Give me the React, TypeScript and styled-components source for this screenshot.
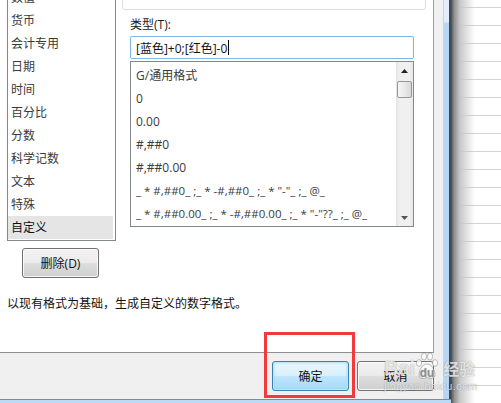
import styled, { createGlobalStyle, css } from 'styled-components';

const GlobalStyle = createGlobalStyle`
  html, body {
    margin: 0;
    padding: 0;
    background: #fff;
  }
  body {
    font-family: 'Open Sans', 'Noto Sans CJK SC', sans-serif;
    font-size: 12px;
    color: #222;
  }
`;

const categories = [
  '数值',
  '货币',
  '会计专用',
  '日期',
  '时间',
  '百分比',
  '分数',
  '科学记数',
  '文本',
  '特殊',
  '自定义',
];

const formats = [
  'G/通用格式',
  '0',
  '0.00',
  '#,##0',
  '#,##0.00',
  '_ * #,##0_ ;_ * -#,##0_ ;_ * "-"_ ;_ @_',
  '_ * #,##0.00_ ;_ * -#,##0.00_ ;_ * "-"??_ ;_ @_',
];

const Screen = styled.div`
  position: relative;
  display: flex;
  width: 501px;
  height: 403px;
  overflow: hidden;
`;

const Window = styled.div`
  display: flex;
  flex-direction: column;
  width: 451px;
  flex-shrink: 0;
`;

const WindowRow = styled.div`
  display: flex;
  height: 399px;
`;

const Client = styled.div`
  display: flex;
  flex-direction: column;
  width: 443px;
  background: #f0f0f0;
`;

const Panel = styled.div`
  box-sizing: border-box;
  width: 434px;
  height: 353px;
  padding-left: 7px;
  background: #fff;
  border-right: 1px solid #a0a0a0;
  border-bottom: 1px solid #8e8f8f;
  overflow: hidden;
`;

const Columns = styled.div`
  display: flex;
  gap: 14px;
  margin-top: -15px;
`;

const LeftCol = styled.div`
  display: flex;
  flex-direction: column;
  width: 109px;
`;

const CategoryList = styled.div`
  box-sizing: border-box;
  height: 256px;
  border: 1px solid #828790;
  padding-right: 2px;
`;

const Category = styled.div<{ $selected?: boolean }>`
  height: 23px;
  line-height: 23px;
  padding-left: 3px;
  color: ${p => (p.$selected ? '#111' : '#3a3a3a')};
  background: ${p => (p.$selected ? '#e5e5e5' : 'transparent')};
  white-space: nowrap;
`;

const buttonFace = css`
  box-sizing: border-box;
  display: flex;
  align-items: center;
  justify-content: center;
  width: 77px;
  height: 30px;
  border: 1px solid #707070;
  border-radius: 3px;
  color: #111;
  font-family: 'Open Sans', 'Noto Sans CJK SC', sans-serif;
  font-size: 12px;
  box-shadow: inset 0 0 0 1px rgba(255, 255, 255, 0.8);
  background: linear-gradient(#f3f3f3 0%, #ebebeb 48%, #dddddd 52%, #cfcfcf 100%);
`;

const PushButton = styled.div`
  ${buttonFace}
  margin: 7px 0 0 15px;
`;

const RightCol = styled.div`
  display: flex;
  flex-direction: column;
  width: 284px;
`;

const SampleGroup = styled.div`
  box-sizing: border-box;
  height: 25px;
  width: 304px;
  margin-left: -8px;
  border: 1px solid #d5dfe5;
  border-radius: 3px;
`;

const FieldLabel = styled.div`
  height: 18px;
  line-height: 18px;
  margin-top: 6px;
  color: #1a1a1a;
`;

const TypeInput = styled.div`
  box-sizing: border-box;
  display: flex;
  align-items: center;
  height: 23px;
  margin-top: 2px;
  padding-left: 5px;
  border: 1px solid #7eb4ea;
  border-radius: 2px;
  color: #111;
  white-space: nowrap;
`;

const Caret = styled.span`
  display: inline-block;
  width: 1px;
  height: 15px;
  margin-left: 1px;
  background: #000;
`;

const FormatList = styled.div`
  box-sizing: border-box;
  display: flex;
  height: 166px;
  margin-top: 2px;
  border: 1px solid #828790;
`;

const FormatItems = styled.div`
  flex: 1;
  padding: 2px 0 0 5px;
  overflow: hidden;
`;

const FormatItem = styled.div<{ $small?: boolean }>`
  height: 23px;
  line-height: 23px;
  color: #3a3a3a;
  white-space: nowrap;
  font-size: ${p => (p.$small ? '11.5px' : '12px')};
`;

const ScrollBar = styled.div`
  display: flex;
  flex-direction: column;
  width: 17px;
  background: linear-gradient(to right, #e3e3e3, #f0f0f0 20%, #f0f0f0 80%, #e6e6e6);
`;

const ArrowButton = styled.div`
  display: flex;
  align-items: center;
  justify-content: center;
  height: 17px;
`;

const Thumb = styled.div`
  box-sizing: border-box;
  height: 17px;
  margin: 2px 1px 0;
  border: 1px solid #979797;
  border-radius: 2px;
  background: linear-gradient(to right, #f6f6f6, #e9e9e9 50%, #d8d8d8);
`;

const Track = styled.div`
  flex: 1;
`;

const Hint = styled.div`
  height: 18px;
  line-height: 18px;
  margin-top: 17px;
  color: #111;
`;

const Footer = styled.div`
  flex: 1;
  display: flex;
  justify-content: flex-end;
  gap: 8px;
  padding: 8px 9px 0 0;
`;

const DialogButton = styled.div<{ $default?: boolean }>`
  ${buttonFace}
  ${p =>
    p.$default &&
    css`
      border-color: #3c7fb1;
      box-shadow: inset 0 0 0 1px #c4e5f6, inset 0 0 2px 1px #8ed0f4;
      background: linear-gradient(#eaf6fd 0%, #d9f0fc 48%, #bee6fd 52%, #a7d9f5 100%);
    `}
`;

const SideFrame = styled.div`
  width: 8px;
  box-sizing: border-box;
  border-left: 1px solid #c9d6e2;
  border-right: 2px solid #3f4a55;
  background: linear-gradient(#e4eefa 0, #e4eefa 22px, #b7d6f6 23px, #b7d6f6 100%);
`;

const BottomFrame = styled.div`
  height: 4px;
  box-sizing: border-box;
  border-top: 1px solid #8a8a8a;
  background: #bcd9f5;
`;

const Sheet = styled.div`
  flex: 1;
  background:
    linear-gradient(to right, #4b4b4b 0, #8d8d8d 3px, #c9c9c9 9px, rgba(255, 255, 255, 0) 24px),
    repeating-linear-gradient(to bottom, #fff 0, #fff 7px, #d3d3d3 7px, #d3d3d3 8px, #fff 8px, #fff 18px);
`;

const Highlight = styled.div`
  position: absolute;
  left: 264px;
  top: 332px;
  width: 91px;
  height: 66px;
  box-sizing: border-box;
  border: 3px solid #f23a3c;
`;

const Watermark = styled.div`
  position: absolute;
  left: 384px;
  top: 350px;
  display: flex;
  flex-direction: column;
  color: rgba(255, 255, 255, 0.8);
  text-shadow: 0 0 1px rgba(0, 0, 0, 0.45);
  pointer-events: none;
`;

const MarkRow = styled.div`
  display: flex;
  align-items: flex-end;
  height: 30px;
`;

const MarkLatin = styled.span`
  font-family: 'Liberation Sans', sans-serif;
  font-weight: bold;
  font-size: 20px;
  line-height: 24px;
`;

const Paw = styled.span`
  position: relative;
  display: inline-flex;
  align-items: flex-end;
  justify-content: center;
  width: 22px;
  height: 28px;
  margin: 0 1px;
`;

const PawText = styled.span`
  position: relative;
  font-family: 'Liberation Sans', sans-serif;
  font-weight: bold;
  font-size: 12px;
  line-height: 14px;
  color: rgba(120, 120, 120, 0.35);
`;

const MarkCjk = styled.span`
  margin-left: 4px;
  font-family: 'Noto Sans CJK SC', sans-serif;
  font-weight: bold;
  font-size: 16px;
  line-height: 24px;
`;

const MarkUrl = styled.div`
  font-family: 'Liberation Sans', sans-serif;
  font-size: 11px;
  line-height: 12px;
  letter-spacing: 0.3px;
`;

function UpArrow() {
  return (
    <svg width="7" height="4" viewBox="0 0 7 4">
      <path d="M3.5 0 L7 4 L0 4 Z" fill="#222" />
    </svg>
  );
}

function DownArrow() {
  return (
    <svg width="7" height="4" viewBox="0 0 7 4">
      <path d="M0 0 L7 0 L3.5 4 Z" fill="#555" />
    </svg>
  );
}

function PawIcon() {
  return (
    <svg
      width="22"
      height="28"
      viewBox="0 0 22 28"
      style={{ position: 'absolute', left: 0, top: 0 }}
    >
      <g fill="rgba(255,255,255,0.8)" stroke="rgba(0,0,0,0.3)" strokeWidth="0.8">
        <ellipse cx="3" cy="11" rx="2.6" ry="3.4" />
        <ellipse cx="8" cy="4.5" rx="2.6" ry="3.6" />
        <ellipse cx="14" cy="4.5" rx="2.6" ry="3.6" />
        <ellipse cx="19" cy="11" rx="2.6" ry="3.4" />
        <path d="M11 12 C6 12 3 19 3 23 C3 27 8 27 11 25.5 C14 27 19 27 19 23 C19 19 16 12 11 12 Z" />
      </g>
    </svg>
  );
}

export default function App() {
  return (
    <>
      <GlobalStyle />
      <Screen>
        <Window>
          <WindowRow>
            <Client>
              <Panel>
                <Columns>
                  <LeftCol>
                    <CategoryList>
                      {categories.map(c => (
                        <Category key={c} $selected={c === '自定义'}>
                          {c}
                        </Category>
                      ))}
                    </CategoryList>
                    <PushButton>删除(D)</PushButton>
                  </LeftCol>
                  <RightCol>
                    <SampleGroup />
                    <FieldLabel>类型(T):</FieldLabel>
                    <TypeInput>
                      [蓝色]+0;[红色]-0
                      <Caret />
                    </TypeInput>
                    <FormatList>
                      <FormatItems>
                        {formats.map(f => (
                          <FormatItem key={f} $small={f.length > 20}>
                            {f}
                          </FormatItem>
                        ))}
                      </FormatItems>
                      <ScrollBar>
                        <ArrowButton>
                          <UpArrow />
                        </ArrowButton>
                        <Thumb />
                        <Track />
                        <ArrowButton>
                          <DownArrow />
                        </ArrowButton>
                      </ScrollBar>
                    </FormatList>
                  </RightCol>
                </Columns>
                <Hint>以现有格式为基础，生成自定义的数字格式。</Hint>
              </Panel>
              <Footer>
                <DialogButton $default>确定</DialogButton>
                <DialogButton>取消</DialogButton>
              </Footer>
            </Client>
            <SideFrame />
          </WindowRow>
          <BottomFrame />
        </Window>
        <Sheet />
        <Highlight />
        <Watermark>
          <MarkRow>
            <MarkLatin>Bai</MarkLatin>
            <Paw>
              <PawIcon />
              <PawText>du</PawText>
            </Paw>
            <MarkCjk>经验</MarkCjk>
          </MarkRow>
          <MarkUrl>jingyan.baidu.com</MarkUrl>
        </Watermark>
      </Screen>
    </>
  );
}
